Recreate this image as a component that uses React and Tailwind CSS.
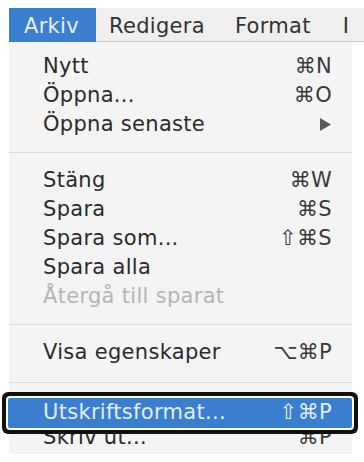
import React from "react";

const groups = [
  [
    { label: "Nytt", key: "⌘N" },
    { label: "Öppna...", key: "⌘O" },
    { label: "Öppna senaste", sub: true },
  ],
  [
    { label: "Stäng", key: "⌘W" },
    { label: "Spara", key: "⌘S" },
    { label: "Spara som...", key: "⇧⌘S" },
    { label: "Spara alla" },
    { label: "Återgå till sparat", disabled: true },
  ],
  [{ label: "Visa egenskaper", key: "⌥⌘P" }],
];

const Row = ({ item }) => (
  <div
    className={
      "h-[29px] flex items-center justify-between pl-[34px] pr-[20px] " +
      (item.disabled ? "text-[#b4b4b4]" : "text-[#2b2b2b]")
    }
  >
    <span>{item.label}</span>
    {item.key && <span className="text-[#3a3a3a]">{item.key}</span>}
    {item.sub && (
      <svg width="11" height="13" viewBox="0 0 11 13" className="mr-[1px]">
        <path d="M0 0 L11 6.5 L0 13 Z" fill="#5a5a5a" />
      </svg>
    )}
  </div>
);

const Separator = ({ h = "h-[27px]" }) => (
  <div className={h + " flex items-center"}>
    <div className="w-full h-px bg-[#dadada]" />
  </div>
);

export default function App() {
  return (
    <div
      className="w-[364px] h-[462px] bg-white overflow-hidden text-[21px] tracking-[0.3px]"
      style={{ fontFamily: '"DejaVu Sans", "Liberation Sans", sans-serif' }}
    >
      <div className="mt-[8px] ml-[9px] h-[34px] flex items-center pt-[4px] bg-[#efefef] border-b border-[#c8c8c8] text-[#333]">
        <div className="-mt-[4px] h-[34px] w-[87px] bg-[#3a7ed0] text-[#e6f0ff] flex items-center pt-[4px] pl-[15px]">
          Arkiv
        </div>
        <span className="ml-[13px]">Redigera</span>
        <span className="ml-[30px]">Format</span>
        <span className="ml-[32px]">I</span>
      </div>

      <div className="ml-[9px] w-[343px] h-[412px] bg-[#f4f4f4] pt-[10px]">
        {groups.map((g, i) => (
          <div key={i}>
            {g.map((item) => (
              <Row key={item.label} item={item} />
            ))}
            {i < groups.length - 1 && <Separator />}
          </div>
        ))}
        <Separator h="h-[31px]" />
        <div className="relative z-10 h-[30px] -ml-[1px] flex items-center justify-between pl-[35px] pr-[20px] bg-[#3a7ed0] text-[#e4eeff] rounded-[2px] shadow-[0_0_0_2px_#ffffff,0_0_0_6px_#111111]">
          <span>Utskriftsformat...</span>
          <span>⇧⌘P</span>
        </div>
        <div className="-mt-[5px]">
          <Row item={{ label: "Skriv ut...", key: "⌘P" }} />
        </div>
      </div>
    </div>
  );
}
